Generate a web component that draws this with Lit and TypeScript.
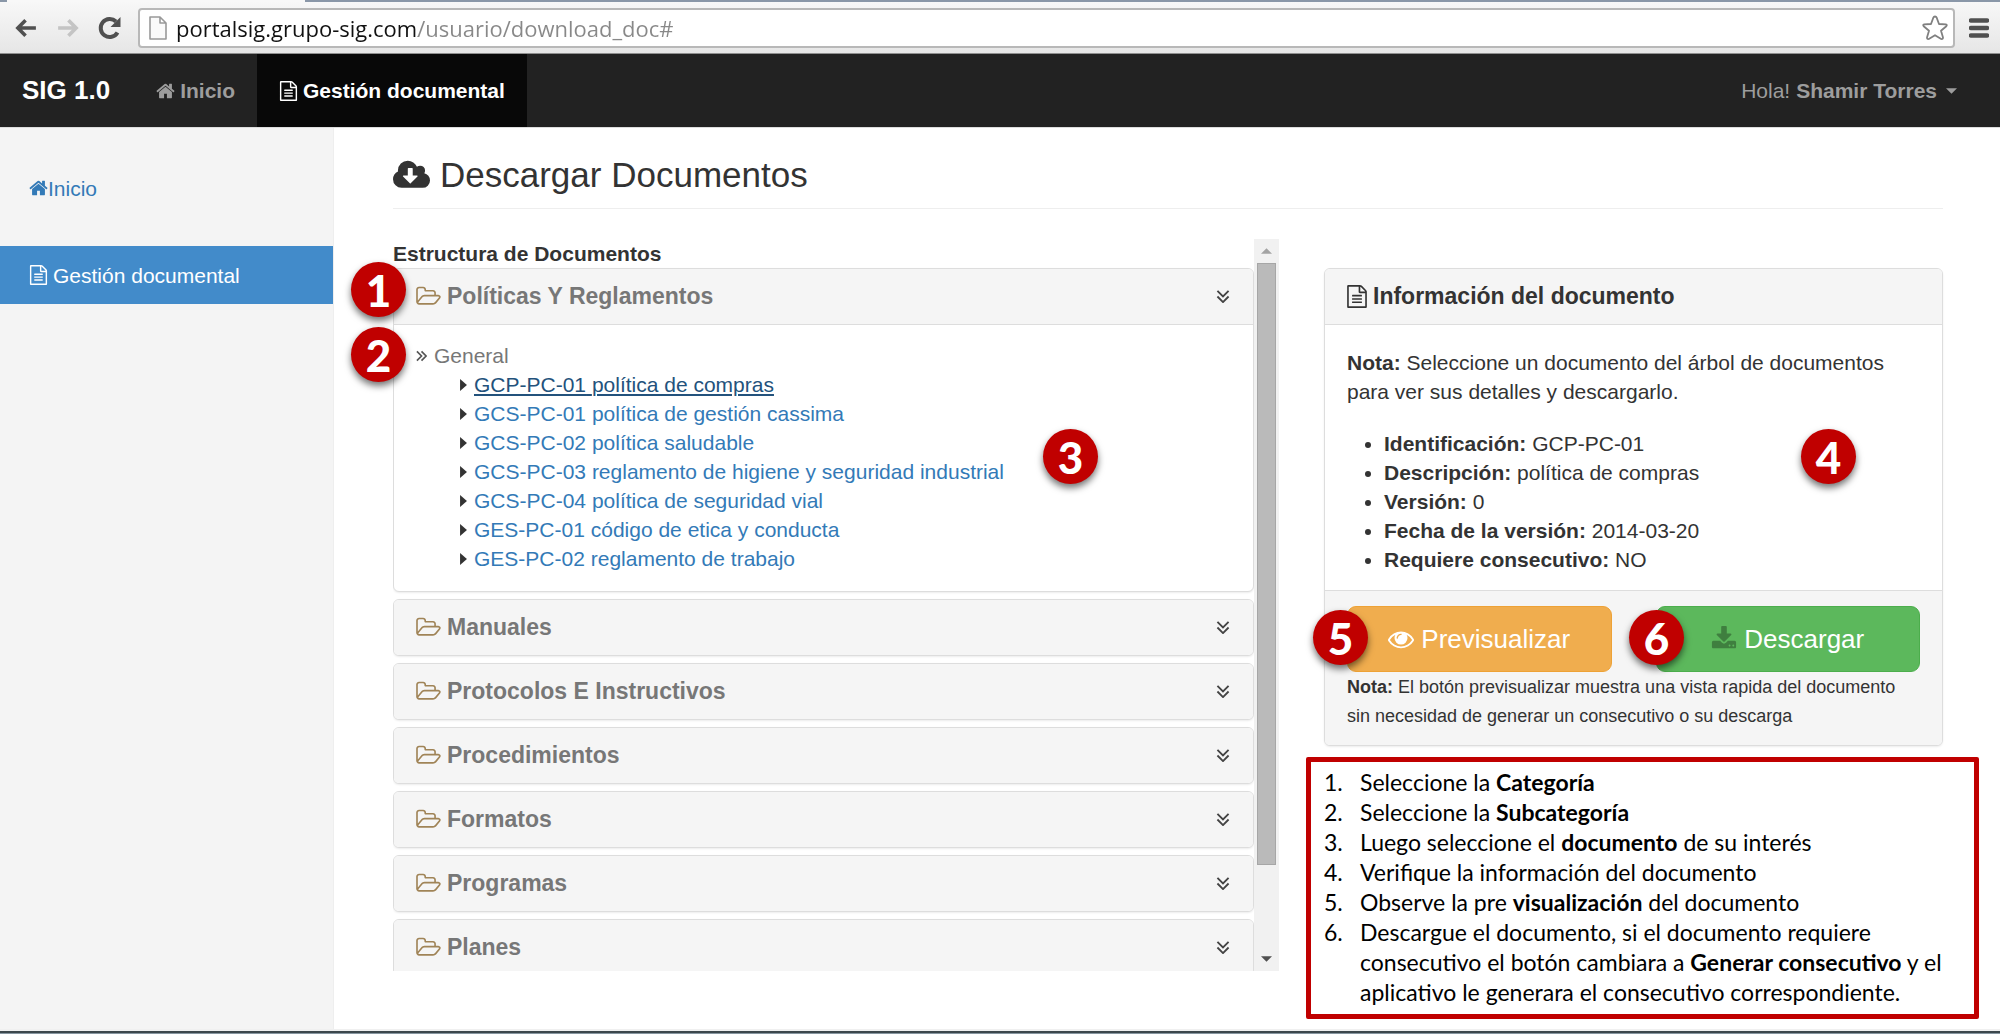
import { LitElement, html, css, svg } from "lit";
import { customElement, property, state } from "lit/decorators.js";
import { classMap } from "lit/directives/class-map.js";

const ICONS: Record<string, { box: string; shape: unknown }> = {
  home: {
    box: "64 0 1664 1792",
    shape: svg`<path d="M1472 992v480q0 26-19 45t-45 19h-384v-384h-256v384h-384q-26 0-45-19t-19-45v-480q0-1 .5-3t.5-3l575-474 575 474q1 2 1 6zm223-69l-62 74q-8 9-21 11h-3q-13 0-21-7l-692-577-692 577q-12 8-24 7-13-2-21-11l-62-74q-8-10-7-23.5t11-21.5l719-599q32-26 76-26t76 26l244 204v-195q0-14 9-23t23-9h192q14 0 23 9t9 23v408l219 182q10 8 11 21.5t-7 23.5z"/>`,
  },
  file: {
    box: "128 0 1536 1792",
    shape: svg`<path d="M1596 380q28 28 48 76t20 88v1152q0 40-28 68t-68 28h-1344q-40 0-68-28t-28-68v-1600q0-40 28-68t68-28h896q40 0 88 20t76 48zm-444-244v376h376q-10-29-22-41l-313-313q-12-12-41-22zm384 1528v-1024h-416q-40 0-68-28t-28-68v-416h-768v1536h1280zm-1024-864q0-14 9-23t23-9h704q14 0 23 9t9 23v64q0 14-9 23t-23 9h-704q-14 0-23-9t-9-23v-64zm736 224q14 0 23 9t9 23v64q0 14-9 23t-23 9h-704q-14 0-23-9t-9-23v-64q0-14 9-23t23-9h704zm0 256q14 0 23 9t9 23v64q0 14-9 23t-23 9h-704q-14 0-23-9t-9-23v-64q0-14 9-23t23-9h704z"/>`,
  },
  cloud: {
    box: "-64 0 1920 1792",
    shape: svg`<path d="M1216 928q0-14-9-23t-23-9h-224v-352q0-13-9.5-22.5t-22.5-9.5h-192q-13 0-22.5 9.5t-9.5 22.5v352h-224q-13 0-22.5 9.5t-9.5 22.5q0 14 9 23l352 352q9 9 23 9t23-9l351-351q10-12 10-24zm640 224q0 159-112.5 271.5t-271.5 112.5h-1088q-185 0-316.5-131.5t-131.5-316.5q0-130 70-240t188-165q-2-30-2-43 0-212 150-362t362-150q156 0 285.5 87t188.5 231q71-62 166-62 106 0 181 75t75 181q0 76-41 138 130 31 213.5 135.5t83.5 238.5z"/>`,
  },
  folder: {
    box: "64 0 1920 1792",
    shape: svg`<path d="M1845 931q0-35-53-35h-1088q-40 0-85.5 21.5t-71.5 52.5l-294 363q-18 24-18 40 0 35 53 35h1088q40 0 86-22t71-53l294-363q18-22 18-39zm-1141-163h768v-160q0-40-28-68t-68-28h-576q-40 0-68-28t-28-68v-64q0-40-28-68t-68-28h-320q-40 0-68 28t-28 68v853l256-315q44-53 116-87.5t140-34.5zm1269 163q0 62-46 120l-295 363q-43 53-116 87.5t-140 34.5h-1088q-92 0-158-66t-66-158v-960q0-92 66-158t158-66h320q92 0 158 66t66 158v32h544q92 0 158 66t66 158v160h192q54 0 99 24.5t67 70.5q15 32 15 68z"/>`,
  },
  eye: {
    box: "0 0 1792 1792",
    shape: svg`<path d="M1664 960q-152-236-381-353 61 104 61 225 0 185-131.5 316.5t-316.5 131.5-316.5-131.5-131.5-316.5q0-121 61-225-229 117-381 353 133 205 333.5 326.5t434.5 121.5 434.5-121.5 333.5-326.5zm-720-384q0-20-14-34t-34-14q-125 0-214.5 89.5t-89.5 214.5q0 20 14 34t34 14 34-14 14-34q0-86 61-147t147-61q20 0 34-14t14-34zm848 384q0 34-20 69-140 230-376.5 368.5t-499.5 138.5-499.5-139-376.5-368q-20-35-20-69t20-69q140-229 376.5-368t499.5-139 499.5 139 376.5 368q20 35 20 69z"/>`,
  },
  download: {
    box: "64 0 1664 1792",
    shape: svg`<path d="M1344 1344q0-26-19-45t-45-19-45 19-19 45 19 45 45 19 45-19 19-45zm256 0q0-26-19-45t-45-19-45 19-19 45 19 45 45 19 45-19 19-45zm128-224v320q0 40-28 68t-68 28h-1472q-40 0-68-28t-28-68v-320q0-40 28-68t68-28h465l135 136q58 56 136 56t136-56l136-136h464q40 0 68 28t28 68zm-325-569q17 41-14 70l-448 448q-18 19-45 19t-45-19l-448-448q-31-29-14-70 17-39 59-39h256v-448q0-26 19-45t45-19h256q26 0 45 19t19 45v448h256q42 0 59 39z"/>`,
  },
  "double-down": {
    box: "0 0 14 14",
    shape: svg`<path d="M1 1l6 6 6-6M1 7l6 6 6-6" fill="none" stroke="currentColor" stroke-width="2"/>`,
  },
  "double-right": {
    box: "0 0 12 12",
    shape: svg`<path d="M1 1l5 5-5 5M6 1l5 5-5 5" fill="none" stroke="currentColor" stroke-width="1.800"/>`,
  },
  "caret-right": { box: "0 0 8 14", shape: svg`<path d="M0 0l8 7-8 7z"/>` },
  "caret-down": { box: "0 0 12 6", shape: svg`<path d="M0 0h12l-6 6z"/>` },
  "caret-up": { box: "0 0 12 6", shape: svg`<path d="M0 6h12l-6-6z"/>` },
  back: {
    box: "0 0 24 20",
    shape: svg`<path d="M11.500 1.500L3 10l8.500 8.500M3.500 10H23" fill="none" stroke="currentColor" stroke-width="4"/>`,
  },
  forward: {
    box: "0 0 24 20",
    shape: svg`<path d="M12.500 1.500L21 10l-8.500 8.500M20.500 10H1" fill="none" stroke="currentColor" stroke-width="4"/>`,
  },
  reload: {
    box: "0 0 24 24",
    shape: svg`<path d="M19.500 16.500A9 9 0 1 1 18 5.500" fill="none" stroke="currentColor" stroke-width="4"/><path d="M22.500 1v10h-10z"/>`,
  },
  page: {
    box: "0 0 18 24",
    shape: svg`<path d="M1 1h10l6 6v16H1zM11 1v6h6" fill="#fafafa" stroke="currentColor" stroke-width="1.600" stroke-linejoin="round"/>`,
  },
  star: {
    box: "0 0 26 26",
    shape: svg`<path d="M13 1.500q1.200 0 1.700 1.200L17 9l6.800.3q1.700.5.500 2L19 15.700l2 6.800q0 2-1.800 1.500L13 20.200 6.800 24Q5 24.500 5 22.500l2-6.800-5.300-4.400q-1.200-1.500.500-2L9 9l2.300-6.300Q11.800 1.500 13 1.500z" fill="#fff" stroke="currentColor" stroke-width="1.800" stroke-linejoin="round"/>`,
  },
  menu: {
    box: "0 0 20 20",
    shape: svg`<path d="M2 2.500h16M2 10h16M2 17.500h16" fill="none" stroke="currentColor" stroke-width="4.500" stroke-linecap="round"/>`,
  },
};

@customElement("ui-icon")
class UiIcon extends LitElement {
  @property() name = "home";

  static styles = css`
    :host {
      display: inline-flex;
      flex: none;
    }
    svg {
      display: block;
      width: 100%;
      height: 100%;
      fill: currentColor;
    }
  `;

  render() {
    const icon = ICONS[this.name];
    return html`<svg viewBox=${icon.box} aria-hidden="true">${icon.shape}</svg>`;
  }
}

@customElement("step-badge")
class StepBadge extends LitElement {
  @property({ type: Number }) step = 1;

  static styles = css`
    :host {
      display: flex;
      align-items: center;
      justify-content: center;
      width: 55px;
      height: 55px;
      border-radius: 50%;
      background: #c00000;
      color: #fff;
      font: 900 44px/52px Lato, sans-serif;
      box-shadow: 0 4px 7px rgba(0, 0, 0, 0.55);
    }
  `;

  render() {
    return html`<span>${this.step}</span>`;
  }
}

interface Documento {
  id: string;
  descripcion: string;
}

const DOCUMENTOS: Documento[] = [
  { id: "GCP-PC-01", descripcion: "política de compras" },
  { id: "GCS-PC-01", descripcion: "política de gestión cassima" },
  { id: "GCS-PC-02", descripcion: "política saludable" },
  { id: "GCS-PC-03", descripcion: "reglamento de higiene y seguridad industrial" },
  { id: "GCS-PC-04", descripcion: "política de seguridad vial" },
  { id: "GES-PC-01", descripcion: "código de etica y conducta" },
  { id: "GES-PC-02", descripcion: "reglamento de trabajo" },
];

const CATEGORIAS = [
  "Políticas Y Reglamentos",
  "Manuales",
  "Protocolos E Instructivos",
  "Procedimientos",
  "Formatos",
  "Programas",
  "Planes",
];

@customElement("app-root")
class AppRoot extends LitElement {
  @state() private abierta = 0;
  @state() private actual = DOCUMENTOS[0];

  static styles = css`
    :host {
      display: flex;
      flex-direction: column;
      min-height: 100vh;
      background: #fff;
      color: #333;
      font: 21px/29px "Liberation Sans", Arial, sans-serif;
    }
    *,
    *::before {
      box-sizing: border-box;
    }
    a {
      color: #337ab7;
      text-decoration: none;
    }
    button {
      border: 0;
      padding: 0;
      background: none;
      color: inherit;
      font: inherit;
      cursor: pointer;
    }
    h1,
    h2,
    p,
    ul,
    ol {
      margin: 0;
      padding: 0;
      font-size: inherit;
      font-weight: inherit;
    }
    ul {
      list-style: none;
    }

    .toolbar {
      display: flex;
      align-items: center;
      height: 54px;
      padding: 2px 11px 0 14px;
      background:
        linear-gradient(to right, #8a97a8 7px, #f8f8f8 7px, #f8f8f8 305px, #8a97a8 305px) top / 100%
          2px no-repeat,
        linear-gradient(#f8f8f8, #e6e6e6);
      border-bottom: 1px solid #8f8f8f;
      color: #505050;
    }
    .nav-buttons {
      display: flex;
      align-items: center;
      gap: 18px;
      margin-right: 16px;
    }
    .nav-buttons button {
      display: flex;
    }
    .nav-buttons ui-icon {
      width: 24px;
      height: 18px;
    }
    .nav-buttons .reload {
      height: 24px;
    }
    .forward {
      color: #c4c4c4;
    }
    .address {
      flex: 1;
      display: flex;
      align-items: center;
      gap: 9px;
      height: 40px;
      padding: 0 5px 0 9px;
      background: #fff;
      border: 2px solid #b8b8b8;
      border-radius: 4px;
    }
    .address button,
    .menu {
      display: flex;
    }
    .page-icon {
      width: 18px;
      height: 24px;
      color: #999;
    }
    .star {
      width: 26px;
      height: 26px;
      color: #808080;
    }
    .menu {
      margin-left: 14px;
    }
    .menu ui-icon {
      width: 20px;
      height: 20px;
    }
    .url {
      flex: 1;
      height: 34px;
      padding: 0;
      border: 0;
      outline: 0;
      font: 22px/34px "Open Sans", sans-serif;
      color: transparent;
      background: linear-gradient(to right, #111 242px, #888 242px);
      -webkit-background-clip: text;
      background-clip: text;
    }

    .navbar {
      display: flex;
      align-items: stretch;
      height: 73px;
      padding: 0 43px 0 22px;
      background: #222;
      color: #9d9d9d;
      font-weight: bold;
    }
    .navbar a {
      display: flex;
      align-items: center;
      gap: 5px;
      padding: 0 22px;
      color: inherit;
    }
    .navbar .brand {
      padding: 0 24px 0 0;
      color: #fff;
      font-size: 26px;
    }
    .navbar .active {
      background: #080808;
      color: #fff;
    }
    .user {
      display: flex;
      align-items: center;
      gap: 6px;
      margin-left: auto;
    }
    .user span {
      font-weight: normal;
    }
    .user ui-icon {
      width: 11px;
      height: 6px;
      margin-left: 3px;
    }
    .ico {
      width: 19px;
      height: 20px;
    }

    .page {
      flex: 1;
      display: flex;
      border-top: 1px solid #ddd;
    }
    .sidebar {
      flex: none;
      width: 334px;
      padding-top: 31px;
      background: #f4f4f4;
      border-right: 1px solid #eee;
    }
    .sidebar ul {
      display: flex;
      flex-direction: column;
      gap: 29px;
    }
    .sidebar a {
      display: flex;
      align-items: center;
      height: 58px;
      padding: 0 29px;
    }
    .sidebar .active {
      gap: 5px;
      background: #428bca;
      color: #fff;
    }

    main {
      flex: 1;
      display: flex;
      flex-direction: column;
      min-width: 0;
      padding: 25px 57px 58px 59px;
    }
    .title {
      display: flex;
      align-items: center;
      gap: 10px;
      padding-bottom: 11px;
      border-bottom: 1px solid #eee;
      font-size: 35px;
      line-height: 44px;
    }
    .title ui-icon {
      width: 37px;
      height: 35px;
    }
    .columns {
      flex: 1;
      display: grid;
      grid-template-columns: 886fr 619fr;
      gap: 45px;
      margin-top: 30px;
    }

    .tree {
      position: relative;
      display: flex;
      height: 0;
      min-height: 100%;
    }
    .tree-scroll {
      flex: 1;
      overflow: hidden;
    }
    .tree-title {
      display: block;
      font-weight: bold;
    }
    .tree-list {
      display: flex;
      flex-direction: column;
      gap: 7px;
    }
    .scrollbar {
      display: flex;
      flex-direction: column;
      align-items: center;
      width: 25px;
      background: #f1f1f1;
      color: #505050;
    }
    .scrollbar button {
      display: flex;
      align-items: center;
      justify-content: center;
      width: 25px;
      height: 24px;
    }
    .scrollbar .up {
      color: #a3a3a3;
    }
    .scrollbar ui-icon {
      width: 11px;
      height: 6px;
    }
    .rail {
      flex: 1;
      width: 19px;
    }
    .thumb {
      height: 88%;
      background: #bababa;
      border: 1px solid #a6a6a6;
    }

    .panel {
      border: 1px solid #ddd;
      border-radius: 6px;
      background: #fff;
      box-shadow: 0 1px 2px rgba(0, 0, 0, 0.08);
      overflow: hidden;
    }
    .panel-head {
      display: flex;
      align-items: center;
      gap: 6px;
      width: 100%;
      height: 55px;
      padding: 0 23px 0 22px;
      background: #f5f5f5;
      font-size: 23px;
      font-weight: bold;
      text-align: left;
    }
    .panel-head .fold {
      width: 25px;
      height: 23px;
      color: #a08457;
    }
    .panel-head .file {
      width: 20px;
      height: 23px;
    }
    .panel-head .down {
      width: 14px;
      height: 13px;
      margin-left: auto;
      color: #444;
    }
    .category {
      color: #777;
    }
    .open .panel-head,
    .info .panel-head {
      height: 56px;
      border-bottom: 1px solid #ddd;
    }
    .panel-body {
      padding: 16px 22px 18px;
    }
    .group {
      display: flex;
      align-items: center;
      gap: 7px;
      color: #777;
    }
    .group ui-icon {
      width: 11px;
      height: 12px;
      color: #555;
    }
    .docs {
      padding-left: 44px;
    }
    .docs li {
      display: flex;
      align-items: center;
      gap: 7px;
    }
    .docs ui-icon {
      width: 7px;
      height: 12px;
    }
    .docs .current {
      color: #23527c;
      text-decoration: underline;
    }

    .side {
      padding-top: 29px;
    }
    .info-body {
      padding: 23px 22px 16px;
    }
    .info-body ul {
      margin-top: 23px;
      padding-left: 37px;
      list-style: disc;
    }
    .info-foot {
      padding: 15px 22px 14px;
      background: #f5f5f5;
      border-top: 1px solid #ddd;
    }
    .actions {
      display: grid;
      grid-template-columns: 1fr 1fr;
      gap: 44px;
    }
    .actions button {
      display: flex;
      align-items: center;
      justify-content: center;
      gap: 7px;
      height: 66px;
      border-radius: 9px;
      color: #fff;
      font-size: 26px;
    }
    .actions ui-icon {
      width: 26px;
      height: 26px;
    }
    .actions .preview {
      background: #f0ad4e;
      border: 1px solid #eea236;
    }
    .actions .download {
      background: #5cb85c;
      border: 1px solid #4cae4c;
    }
    .download ui-icon {
      color: #3f7f3f;
    }
    .note {
      font-size: 18px;
      padding-top: 1px;
    }

    .info-wrap {
      position: relative;
    }
    .steps {
      position: absolute;
      top: 100%;
      left: -18px;
      right: -36px;
      margin-top: 11px;
      padding: 5px 20px 7px 49px;
      border: 5px solid #c00000;
      border-radius: 2px;
      background: #fff;
      color: #000;
      font: 23px/30px Lato, sans-serif;
      list-style: none;
      counter-reset: step;
    }
    .steps li {
      counter-increment: step;
    }
    .steps li::before {
      content: counter(step) ".";
      float: left;
      margin-left: -36px;
    }

    step-badge {
      position: absolute;
    }
    .b1 {
      left: -42px;
      top: 23px;
    }
    .b2 {
      left: -42px;
      top: 88px;
    }
    .b3 {
      left: 650px;
      top: 190px;
    }
    .b4 {
      right: 87px;
      top: 161px;
    }
    .b5 {
      left: -11px;
      top: 342px;
    }
    .b6 {
      left: 305px;
      top: 342px;
    }

    .taskbar {
      height: 5px;
      background: linear-gradient(#f0f0f0 2px, #3c474c 2px, #3c474c 4px, #8796a0 4px);
    }
  `;

  private elegir(e: Event, doc: Documento) {
    e.preventDefault();
    this.actual = doc;
  }

  private categoria(nombre: string, i: number) {
    const abierta = i === this.abierta;
    return html`
      <section class=${classMap({ panel: true, open: abierta && i === 0 })}>
        <h2>
          <button
            class="panel-head category"
            aria-expanded=${abierta}
            @click=${() => (this.abierta = abierta ? -1 : i)}
          >
            <ui-icon class="fold" name="folder"></ui-icon>
            <span>${nombre}</span>
            <ui-icon class="down" name="double-down"></ui-icon>
          </button>
        </h2>
        ${abierta && i === 0
          ? html`<div class="panel-body">
              <div class="group"><ui-icon name="double-right"></ui-icon>General</div>
              <ul class="docs">
                ${DOCUMENTOS.map(
                  (d) => html`<li>
                    <ui-icon name="caret-right"></ui-icon>
                    <a
                      href="#"
                      class=${classMap({ current: d === this.actual })}
                      @click=${(e: Event) => this.elegir(e, d)}
                      >${d.id} ${d.descripcion}</a
                    >
                  </li>`
                )}
              </ul>
            </div>`
          : ""}
      </section>
    `;
  }

  render() {
    return html`
      <div class="toolbar">
        <div class="nav-buttons">
          <button aria-label="Atrás"><ui-icon name="back"></ui-icon></button>
          <button class="forward" aria-label="Adelante"><ui-icon name="forward"></ui-icon></button>
          <button aria-label="Recargar"><ui-icon class="reload" name="reload"></ui-icon></button>
        </div>
        <div class="address">
          <ui-icon class="page-icon" name="page"></ui-icon>
          <input
            class="url"
            aria-label="Dirección"
            spellcheck="false"
            value="portalsig.grupo-sig.com/usuario/download_doc#"
          />
          <button aria-label="Favorito"><ui-icon class="star" name="star"></ui-icon></button>
        </div>
        <button class="menu" aria-label="Menú"><ui-icon name="menu"></ui-icon></button>
      </div>

      <nav class="navbar">
        <a class="brand" href="#">SIG 1.0</a>
        <a href="#"><ui-icon class="ico" name="home"></ui-icon>Inicio</a>
        <a class="active" href="#"><ui-icon class="ico" name="file"></ui-icon>Gestión documental</a>
        <button class="user">
          <span>Hola!</span><b>Shamir Torres</b><ui-icon name="caret-down"></ui-icon>
        </button>
      </nav>

      <div class="page">
        <aside class="sidebar">
          <ul>
            <li><a href="#"><ui-icon class="ico" name="home"></ui-icon>Inicio</a></li>
            <li>
              <a class="active" href="#"><ui-icon class="ico" name="file"></ui-icon>Gestión documental</a>
            </li>
          </ul>
        </aside>

        <main>
          <h1 class="title"><ui-icon name="cloud"></ui-icon>Descargar Documentos</h1>
          <div class="columns">
            <div class="tree">
              <div class="tree-scroll">
                <b class="tree-title">Estructura de Documentos</b>
                <div class="tree-list">${CATEGORIAS.map((c, i) => this.categoria(c, i))}</div>
              </div>
              <div class="scrollbar">
                <button class="up" aria-label="Subir"><ui-icon name="caret-up"></ui-icon></button>
                <div class="rail"><div class="thumb"></div></div>
                <button aria-label="Bajar"><ui-icon name="caret-down"></ui-icon></button>
              </div>
              <step-badge class="b1" step="1"></step-badge>
              <step-badge class="b2" step="2"></step-badge>
              <step-badge class="b3" step="3"></step-badge>
            </div>

            <div class="side">
              <div class="info-wrap">
                <section class="panel info">
                  <h2 class="panel-head">
                    <ui-icon class="file" name="file"></ui-icon>Información del documento
                  </h2>
                  <div class="info-body">
                    <p>
                      <b>Nota:</b> Seleccione un documento del árbol de documentos para ver sus
                      detalles y descargarlo.
                    </p>
                    <ul>
                      <li><b>Identificación:</b> ${this.actual.id}</li>
                      <li><b>Descripción:</b> ${this.actual.descripcion}</li>
                      <li><b>Versión:</b> 0</li>
                      <li><b>Fecha de la versión:</b> 2014-03-20</li>
                      <li><b>Requiere consecutivo:</b> NO</li>
                    </ul>
                  </div>
                  <div class="info-foot">
                    <div class="actions">
                      <button class="preview"><ui-icon name="eye"></ui-icon>Previsualizar</button>
                      <button class="download"><ui-icon name="download"></ui-icon>Descargar</button>
                    </div>
                    <p class="note">
                      <b>Nota:</b> El botón previsualizar muestra una vista rapida del documento sin
                      necesidad de generar un consecutivo o su descarga
                    </p>
                  </div>
                </section>
                <step-badge class="b4" step="4"></step-badge>
                <step-badge class="b5" step="5"></step-badge>
                <step-badge class="b6" step="6"></step-badge>
                <ol class="steps">
                  <li>Seleccione la <b>Categoría</b></li>
                  <li>Seleccione la <b>Subcategoría</b></li>
                  <li>Luego seleccione el <b>documento</b> de su interés</li>
                  <li>Verifique la información del documento</li>
                  <li>Observe la pre <b>visualización</b> del documento</li>
                  <li>
                    Descargue el documento, si el documento requiere consecutivo el botón cambiara a
                    <b>Generar consecutivo</b> y el aplicativo le generara el consecutivo
                    correspondiente.
                  </li>
                </ol>
              </div>
            </div>
          </div>
        </main>
      </div>
      <div class="taskbar"></div>
    `;
  }
}
